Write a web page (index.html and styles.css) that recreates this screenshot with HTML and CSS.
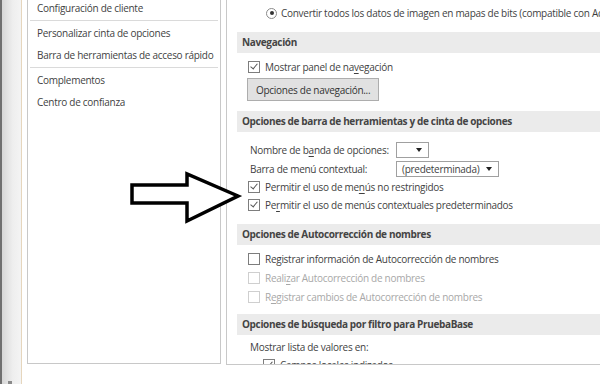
FILE: index.html
```html
<!DOCTYPE html>
<html lang="es">
<head>
    <meta charset="UTF-8">
    <meta name="viewport" content="width=device-width, initial-scale=1.0">
    <title>Opciones de Access</title>
    <link rel="stylesheet" href="styles.css">
</head>
<body>
    <div class="window">
        <div class="strip"><span class="grip"></span></div>

        <nav class="nav-panel">
            <ul class="nav-list">
                <li>Configuración de cliente</li>
                <li class="sep"></li>
                <li>Personalizar cinta de opciones</li>
                <li>Barra de herramientas de acceso rápido</li>
                <li class="sep"></li>
                <li>Complementos</li>
                <li>Centro de confianza</li>
            </ul>
        </nav>

        <main class="options">
            <div class="row radio-row"><span class="radio"></span>Convertir todos los datos de imagen en mapas de bits (compatible con Access 2003 y versiones anteriores)</div>

            <h3 class="band">Navegación</h3>
            <div class="row check-row first"><span class="check on"></span>Mostrar panel de na<u>v</u>egación</div>
            <button class="btn">Opciones de navegación...</button>

            <h3 class="band">Opciones de barra de herramientas y de cinta de opciones</h3>
            <div class="row field-row first">
                <span class="field-label">Nombre de b<u>a</u>nda de opciones:</span>
                <span class="dropdown small"><span class="caret"></span></span>
            </div>
            <div class="row field-row">
                <span class="field-label">Barra de menú contextual:</span>
                <span class="dropdown wide">(predeterminada)<span class="caret"></span></span>
            </div>
            <div class="row check-row"><span class="check on"></span>Permitir el uso de me<u>n</u>ús no restringidos</div>
            <div class="row check-row"><span class="check on"></span>Pe<u>r</u>mitir el uso de menús contextuales predeterminados</div>

            <h3 class="band">Opciones de Autocorrección de nombres</h3>
            <div class="row check-row first-auto"><span class="check"></span>Registrar información de Autocorrección de nombres</div>
            <div class="row check-row disabled"><span class="check"></span>Reali<u>z</u>ar Autocorrección de nombres</div>
            <div class="row check-row disabled"><span class="check"></span>R<u>e</u>gistrar cambios de Autocorrección de nombres</div>

            <h3 class="band band-filter">Opciones de búsqueda por filtro para PruebaBase</h3>
            <div class="row label-row">Mostrar lista de valores en:</div>
            <div class="row check-row nested"><span class="check on"></span>Campos locales indizados</div>
        </main>

        <svg class="callout-arrow" width="116" height="56" viewBox="0 0 116 56">
            <polygon points="4,15 59,15 59,4 110,26 59,51 59,33 4,33" fill="#fff" stroke="#000" stroke-width="3.5" stroke-linejoin="miter"/>
        </svg>
    </div>
</body>
</html>
```

FILE: styles.css
```css
body { margin: 0; font-family: "Open Sans", "Noto Sans", sans-serif; font-size: 10px; letter-spacing: -0.28px; color: #3f3f3f; background: #fff; }
ul { list-style: none; margin: 0; padding: 0; }
u { text-decoration: underline; text-underline-offset: 2px; }

.window { display: flex; height: 384px; overflow: hidden; position: relative; }

/* left edge of the dialog */
.strip { flex: none; width: 21px; border-right: 1px solid #e6d6bd; position: relative;
    background: linear-gradient(to right, #6f6f6f 0, #6f6f6f 2px, #d6d6d6 2px, #eeeeee 60%, #f4f4f4 100%); }
.grip { position: absolute; left: 8px; bottom: 0; width: 4px; height: 3px; background: #8a8a8a; }

/* category list */
.nav-panel { flex: none; width: 192px; height: 363px; margin-left: 5px; border: 1px solid #c8c8c8; border-top: none; overflow: hidden; }
.nav-list { margin-top: -3px; }
.nav-list li { height: 22px; line-height: 22px; padding-left: 9px; white-space: nowrap; }
.nav-list li.sep { height: 1px; margin: 1px 2px; padding: 0; background: #dadada; }

/* options pane */
.options { flex: 1; min-width: 0; height: 364px; margin-left: 5px; margin-right: -20px; border-left: 1px solid #c8c8c8; border-bottom: 1px solid #c8c8c8; overflow: hidden; }
.row { display: flex; align-items: center; height: 19px; white-space: nowrap; }
.radio-row { height: 18px; margin-top: 4px; padding-left: 39px; }
.radio { flex: none; width: 9px; height: 9px; border: 1px solid #8a8a8a; border-radius: 50%; margin-right: 4px; position: relative; background: #fff; }
.radio::after { content: ""; position: absolute; left: 2.5px; top: 2.5px; width: 4px; height: 4px; border-radius: 50%; background: #333; }

.band { margin: 10px 0 0 10px; height: 21px; line-height: 21px; padding-left: 5px; background: #ebebeb; font-size: 10px; letter-spacing: -0.35px; font-weight: bold; color: #444; }
.band-filter { margin-top: 8px; }

.check-row { height: 18px; padding-left: 21px; }
.check-row.first { margin-top: 5px; }
.check-row.first-auto { margin-top: 4px; height: 19px; }
.check-row.disabled { height: 19px; color: #a8a8a8; }
.check-row.nested { padding-left: 36px; }
.check { flex: none; width: 10px; height: 10px; border: 1px solid #7d7d7d; margin-right: 5px; background: #fff; position: relative; }
.check.on::after { content: ""; position: absolute; left: 3px; top: 0; width: 3px; height: 6px; border: solid #555; border-width: 0 1px 1px 0; transform: rotate(40deg); }
.disabled .check { border-color: #cfcfcf; }

.btn { display: block; margin: 2px 0 0 20px; height: 23px; padding: 0 8px; font: inherit; letter-spacing: inherit; color: #333; background: #e1e1e1; border: 1px solid #adadad; }

.field-row { padding-left: 23px; }
.field-row.first { margin-top: 8px; }
.field-label { flex: none; width: 146px; }
.dropdown { flex: none; display: flex; align-items: center; height: 14px; border: 1px solid #a0a0a0; position: relative; padding-left: 5px; background: #fff; }
.dropdown.small { width: 26px; }
.dropdown.wide { width: 96px; }
.caret { position: absolute; right: 6px; top: 5px; border: 3px solid transparent; border-top: 4px solid #222; border-bottom: none; }

.label-row { margin-top: 2px; padding-left: 23px; }

.callout-arrow { position: absolute; left: 128px; top: 170px; }
```
